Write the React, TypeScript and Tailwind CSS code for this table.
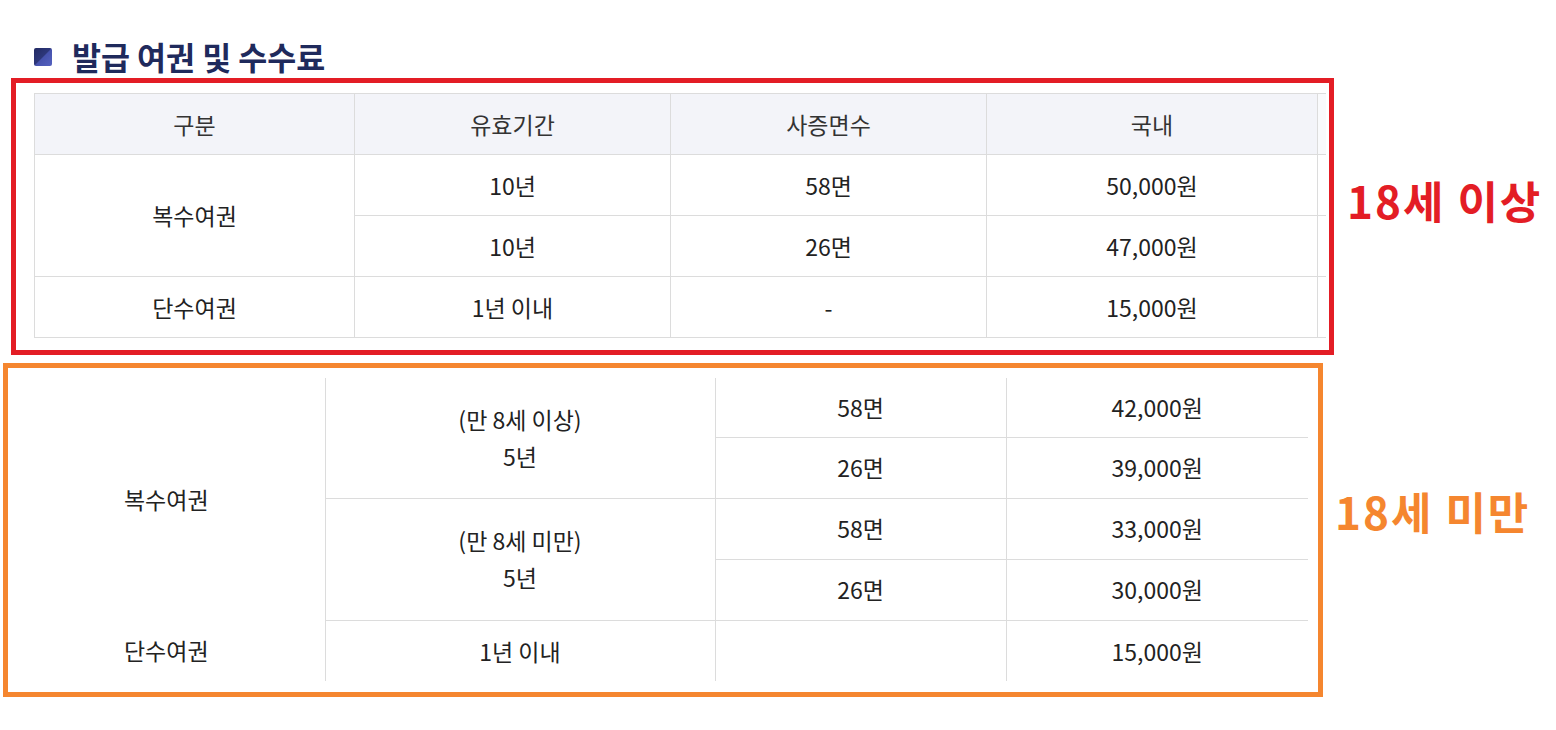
import React from "react";

const font = { fontFamily: '"Noto Sans CJK KR", "Noto Sans", sans-serif' };

export default function App() {
  const b = "border-[#dcdcdc]";
  return (
    <div className="h-[730px] w-[1556px] overflow-hidden bg-white text-[#222] pt-[39px]" style={font}>
      <div className="flex items-center h-[36px] mb-[3px] pl-[34px] gap-[20px]">
        <div className="w-[18px] h-[18px] rounded-[2px] bg-[linear-gradient(135deg,#222a63_0%,#2d377a_48%,#4652ad_52%,#5562c0_100%)]" />
        <h2 className="text-[31.5px] font-bold text-[#1f2a5c] leading-none">발급 여권 및 수수료</h2>
      </div>

      <div className="flex items-start">
        <div className="ml-[11px] w-[1323px] border-[5px] border-[#e31d25] pt-[10px] pl-[18px] pr-[4px] pb-[12px]">
          <table className="table-fixed border-collapse w-[1291px] text-[23px] text-center">
            <colgroup>
              <col className="w-[320px]" />
              <col className="w-[316px]" />
              <col className="w-[316px]" />
              <col className="w-[331px]" />
              <col className="w-[8px]" />
            </colgroup>
            <tbody>
              <tr className="h-[61px] bg-[#f3f4f9] text-[#333]">
                <td className={`border ${b}`}>구분</td>
                <td className={`border ${b}`}>유효기간</td>
                <td className={`border ${b}`}>사증면수</td>
                <td className={`border ${b}`}>국내</td>
                <td className={`border-y ${b} bg-[#f9fafc]`}></td>
              </tr>
              <tr className="h-[61px]">
                <td rowSpan={2} className={`border ${b}`}>복수여권</td>
                <td className={`border ${b}`}>10년</td>
                <td className={`border ${b}`}>58면</td>
                <td className={`border ${b}`}>50,000원</td>
                <td className={`border-y ${b}`}></td>
              </tr>
              <tr className="h-[61px]">
                <td className={`border ${b}`}>10년</td>
                <td className={`border ${b}`}>26면</td>
                <td className={`border ${b}`}>47,000원</td>
                <td className={`border-y ${b}`}></td>
              </tr>
              <tr className="h-[61px]">
                <td className={`border ${b}`}>단수여권</td>
                <td className={`border ${b}`}>1년 이내</td>
                <td className={`border ${b}`}>-</td>
                <td className={`border ${b}`}>15,000원</td>
                <td className={`border-y ${b}`}></td>
              </tr>
            </tbody>
          </table>
        </div>
        <div className="ml-[13px] mt-[100px] text-[44px] font-bold leading-none text-[#e31d25] tracking-[2px] whitespace-nowrap">18세 이상</div>
      </div>

      <div className="flex items-start mt-[8px]">
        <div className="ml-[3px] w-[1320px] border-[5px] border-[#f5862f] pt-[10px] pr-[10px] pb-[11px]">
          <table className="table-fixed border-collapse w-[1300px] text-[23px] text-center">
            <colgroup>
              <col className="w-[317px]" />
              <col className="w-[390px]" />
              <col className="w-[291px]" />
              <col className="w-[302px]" />
            </colgroup>
            <tbody>
              <tr className="h-[59px]">
                <td rowSpan={4} className={`border-r ${b}`}>복수여권</td>
                <td rowSpan={2} className={`border-r border-b ${b} leading-[37px]`}>
                  (만 8세 이상)
                  <br />
                  5년
                </td>
                <td className={`border-r border-b ${b}`}>58면</td>
                <td className={`border-b ${b}`}>42,000원</td>
              </tr>
              <tr className="h-[61px]">
                <td className={`border-r border-b ${b}`}>26면</td>
                <td className={`border-b ${b}`}>39,000원</td>
              </tr>
              <tr className="h-[61px]">
                <td rowSpan={2} className={`border-r border-b ${b} leading-[37px]`}>
                  (만 8세 미만)
                  <br />
                  5년
                </td>
                <td className={`border-r border-b ${b}`}>58면</td>
                <td className={`border-b ${b}`}>33,000원</td>
              </tr>
              <tr className="h-[61px]">
                <td className={`border-r border-b ${b}`}>26면</td>
                <td className={`border-b ${b}`}>30,000원</td>
              </tr>
              <tr className="h-[61px]">
                <td className={`border-r ${b}`}>단수여권</td>
                <td className={`border-r ${b}`}>1년 이내</td>
                <td className={`border-r ${b}`}></td>
                <td>15,000원</td>
              </tr>
            </tbody>
          </table>
        </div>
        <div className="ml-[12px] mt-[126px] text-[44px] font-bold leading-none text-[#f5862f] tracking-[2px] whitespace-nowrap">18세 미만</div>
      </div>
    </div>
  );
}
